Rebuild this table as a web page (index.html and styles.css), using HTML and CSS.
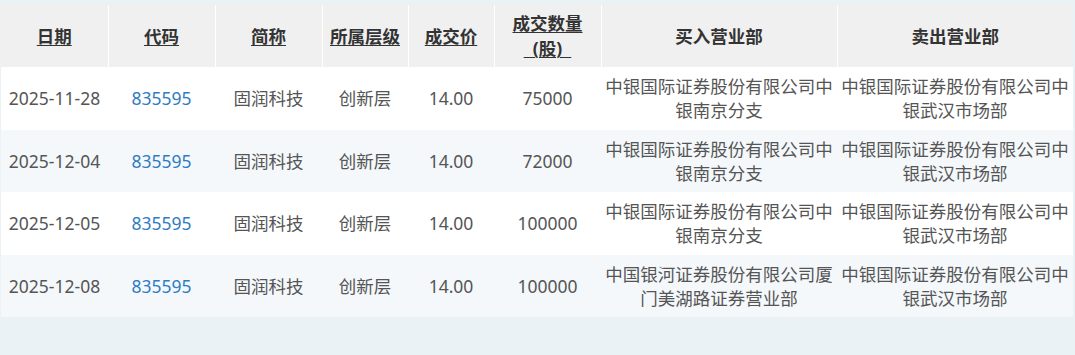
FILE: index.html
```html
<!DOCTYPE html>
<html lang="zh-CN">
<head>
<meta charset="utf-8">
<link rel="stylesheet" href="styles.css">
</head>
<body>
<div class="page">
<table class="trades">
<colgroup>
<col class="c-date"><col class="c-code"><col class="c-name"><col class="c-tier"><col class="c-price"><col class="c-vol"><col class="c-dept"><col class="c-dept">
</colgroup>
<thead>
<tr>
<th><span class="sort">日期</span></th>
<th><span class="sort">代码</span></th>
<th><span class="sort">简称</span></th>
<th><span class="sort">所属层级</span></th>
<th><span class="sort">成交价</span></th>
<th><span class="sort">成交数量<br>&nbsp;&nbsp;(股)&nbsp;&nbsp;</span></th>
<th>买入营业部</th>
<th>卖出营业部</th>
</tr>
</thead>
<tbody>
<tr>
<td>2025-11-28</td><td class="code">835595</td><td>固润科技</td><td>创新层</td><td>14.00</td><td>75000</td>
<td>中银国际证券股份有限公司中银南京分支</td><td>中银国际证券股份有限公司中银武汉市场部</td>
</tr>
<tr>
<td>2025-12-04</td><td class="code">835595</td><td>固润科技</td><td>创新层</td><td>14.00</td><td>72000</td>
<td>中银国际证券股份有限公司中银南京分支</td><td>中银国际证券股份有限公司中银武汉市场部</td>
</tr>
<tr>
<td>2025-12-05</td><td class="code">835595</td><td>固润科技</td><td>创新层</td><td>14.00</td><td>100000</td>
<td>中银国际证券股份有限公司中银南京分支</td><td>中银国际证券股份有限公司中银武汉市场部</td>
</tr>
<tr>
<td>2025-12-08</td><td class="code">835595</td><td>固润科技</td><td>创新层</td><td>14.00</td><td>100000</td>
<td>中国银河证券股份有限公司厦门美湖路证券营业部</td><td>中银国际证券股份有限公司中银武汉市场部</td>
</tr>
</tbody>
</table>
</div>
</body>
</html>
```
FILE: styles.css
```css
html, body {
  margin: 0;
  padding: 0;
  background: #ebf2f6;
  height: 100%;
}
.page {
  padding: 5px 2px 0 1px;
}
.trades {
  width: 1072px;
  table-layout: fixed;
  border-collapse: collapse;
  border-spacing: 0;
  font-family: "Noto Sans", "Noto Sans CJK SC", sans-serif;
  font-size: 17.5px;
  color: #555;
}
.c-date, .c-code, .c-name, .c-vol { width: 107px; }
.c-tier, .c-price { width: 86px; }
.c-dept { width: 236px; }
.trades th {
  height: 62px;
  padding: 0 2px;
  background: #f0f0f0;
  color: #333;
  font-weight: bold;
  line-height: 25px;
  text-align: center;
  vertical-align: middle;
  border-left: 1px solid #fff;
}
.trades th:first-child { border-left: none; }
.sort {
  text-decoration: underline;
  text-underline-offset: 2px;
  text-decoration-thickness: 1px;
}
.trades td {
  height: 62.5px;
  padding: 0 2px;
  box-sizing: border-box;
  line-height: 24px;
  text-align: center;
  vertical-align: middle;
  background: #fff;
}
.trades tbody tr:nth-child(even) td { background: #f4f8fb; }
.trades td.code { color: #2f7cc4; }
```
